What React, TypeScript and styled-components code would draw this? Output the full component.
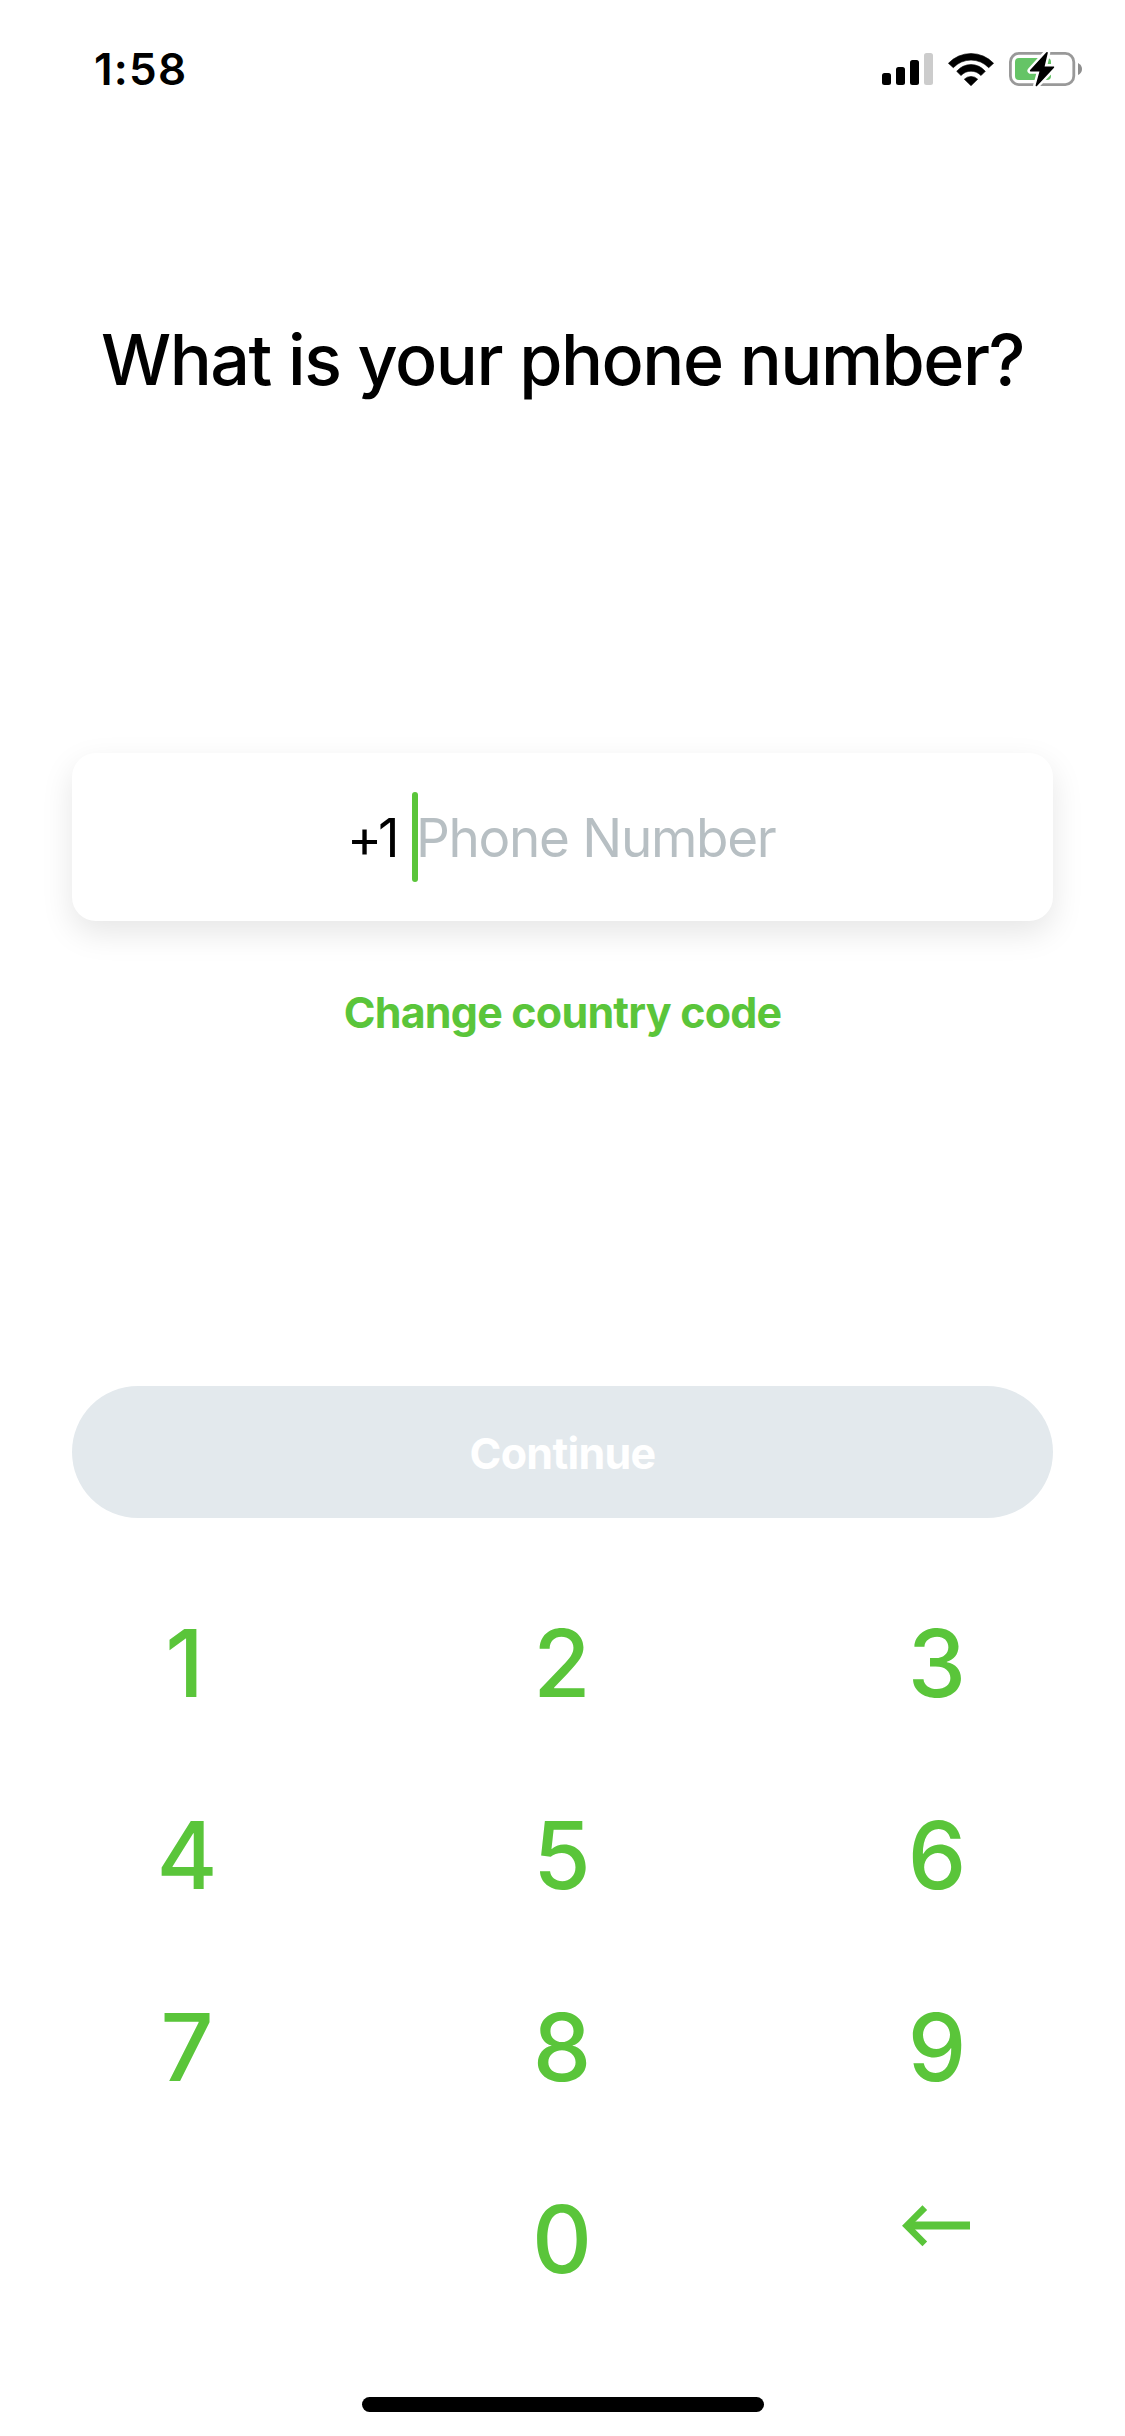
import React from 'react';
import styled, { createGlobalStyle } from 'styled-components';

const green = '#5ac53a';

const Global = createGlobalStyle`
  *{box-sizing:border-box}
  body{margin:0;background:#fff;color:#000;font-family:Inter,"Liberation Sans",sans-serif}
`;
const Screen = styled.main`
  width:1125px;height:2436px;display:flex;flex-direction:column;background:#fff;overflow:hidden;
`;
const StatusBar = styled.header`
  height:138px;padding:0 43px 0 94px;display:flex;align-items:center;justify-content:space-between;
`;
const Time = styled.span`font-size:44px;font-weight:600;line-height:54px;letter-spacing:1.2px;`;
const StatusIcons = styled.div`
  display:flex;align-items:center;gap:15px;
  svg{display:block;overflow:visible}
`;
const Title = styled.h1`
  margin:178px 0 0;height:88px;line-height:88px;text-align:center;font-size:70px;font-weight:450;
  letter-spacing:-1.5px;white-space:nowrap;
`;
const Field = styled.div`
  margin:349px 72px 0;height:168px;padding-left:275px;border-radius:24px;background:#fff;
  box-shadow:0 12px 32px rgba(0,0,0,.1);display:flex;align-items:center;font-size:53px;
`;
const Prefix = styled.span`width:65px;padding-top:2px;letter-spacing:-4px;white-space:nowrap;`;
const Caret = styled.i`width:6px;height:90px;border-radius:3px;background:${green};`;
const Placeholder = styled.span`
  padding-top:2px;margin-left:-2px;color:#b7bfc3;letter-spacing:-1.3px;white-space:nowrap;
`;
const Link = styled.a`
  margin-top:63px;height:56px;line-height:56px;text-align:center;color:${green};
  font-weight:700;font-size:43px;letter-spacing:-.8px;
`;
const Continue = styled.button`
  margin:346px 72px 0;height:132px;padding:2px 0 0;border:0;border-radius:66px;background:#e3e9ed;color:#fff;
  font:700 43px Inter,"Liberation Sans",sans-serif;letter-spacing:-.7px;
`;
const Keypad = styled.div`
  display:grid;grid-template-columns:repeat(3,375px);grid-auto-rows:192px;margin-top:49px;
`;
const Key = styled.div<{ $nudge?: number }>`
  display:flex;align-items:center;justify-content:center;color:${green};font-size:93px;font-weight:500;
  padding-right:${p => p.$nudge ?? 1}px;
`;
const BackArrow = styled.svg`display:block;margin:0 3px 27px 0;`;
const Home = styled.div`width:402px;height:15px;border-radius:8px;background:#000;margin:62px auto 0;`;

const Signal = () => (
  <svg width="51" height="32" viewBox="0 0 51 32">
    <rect x="0" y="20" width="9" height="12" rx="2.5" />
    <rect x="14" y="14" width="9" height="18" rx="2.5" />
    <rect x="28" y="7" width="9" height="25" rx="2.5" />
    <rect x="42" y="0" width="9" height="32" rx="2.5" fill="#ccc" />
  </svg>
);

const Wifi = () => (
  <svg width="46" height="33" viewBox="0 0 46 33" stroke="#000" strokeWidth=".6" strokeLinejoin="round">
    <path d="M.4 10.3A31 31 0 0 1 45.6 10.3L40.7 14.7A24.4 24.4 0 0 0 5.3 14.7Z" />
    <path d="M8.7 18.3A18.5 18.5 0 0 1 37.3 18.3L33 22.6A13.5 13.5 0 0 0 13 22.6Z" />
    <path d="M16.3 26.2A9.5 9.5 0 0 1 29.7 26.2L23 32.7Z" />
  </svg>
);

const Battery = () => (
  <svg width="73" height="34" viewBox="0 0 73 34">
    <rect x="1.4" y="1.4" width="63.4" height="31.2" rx="8.5" fill="none" stroke="#999" strokeWidth="2.8" />
    <path d="M69 11Q73 13 73 17T69 23Z" fill="#8e8e8e" />
    <rect x="6" y="6" width="36" height="22" rx="4" fill="#65c466" />
    <path
      d="M38 .8L21.7 18.6H31.5L27.4 33.4L44.4 15.2H34.6Z"
      fill="#000" stroke="#fff" strokeWidth="6.5" strokeLinejoin="round" paintOrder="stroke"
    />
    <path d="M38 .8L21.7 18.6H31.5L27.4 33.4L44.4 15.2H34.6Z" stroke="#000" strokeWidth="1.6" strokeLinejoin="round" />
  </svg>
);

const Back = () => (
  <BackArrow width="68" height="42" viewBox="0 0 68 42" fill="none" stroke={green}>
    <path d="M68 20.4H7" strokeWidth="8" />
    <path d="M22.8 2.6L4.7 20.7L22.8 38.8" strokeWidth="6.6" />
  </BackArrow>
);

const keys = ['1', '2', '3', '4', '5', '6', '7', '8', '9', '', '0'];

export default function App() {
  return (
    <Screen>
      <Global />
      <StatusBar>
        <Time>1:58</Time>
        <StatusIcons><Signal /><Wifi /><Battery /></StatusIcons>
      </StatusBar>
      <Title>What is your phone number?</Title>
      <Field><Prefix>+1</Prefix><Caret /><Placeholder>Phone Number</Placeholder></Field>
      <Link>Change country code</Link>
      <Continue>Continue</Continue>
      <Keypad>
        {keys.map((k, i) => <Key key={i} $nudge={k === '1' ? 6 : 1}>{k}</Key>)}
        <Key $nudge={0}><Back /></Key>
      </Keypad>
      <Home />
    </Screen>
  );
}
